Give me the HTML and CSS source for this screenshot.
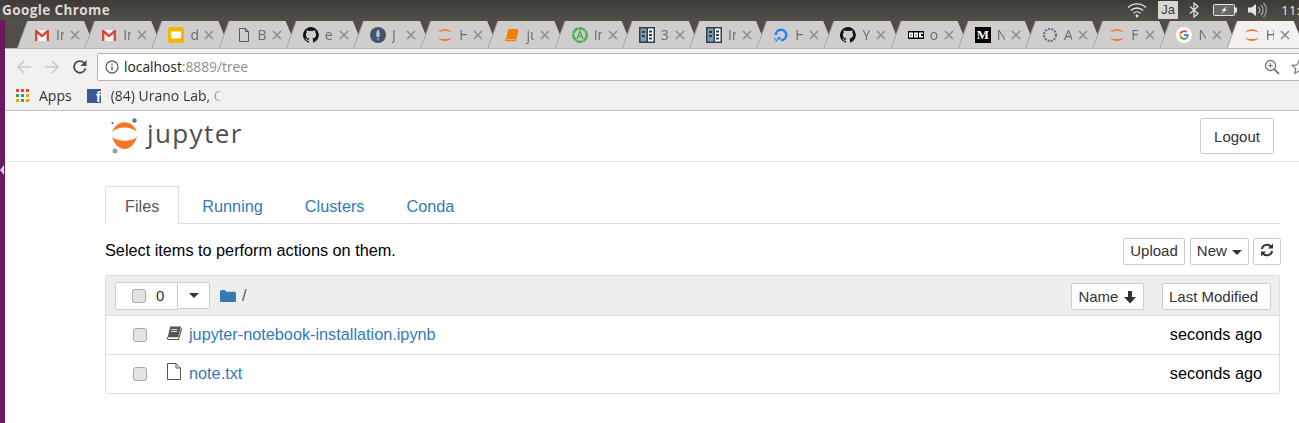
FILE: index.html
```html
<!DOCTYPE html>
<html lang="en">
<head>
  <meta charset="UTF-8" />
  <title>Home</title>
  <link rel="stylesheet" href="styles.css">
</head>
<body>

  <!-- shared icons -->
  <svg class="defs" aria-hidden="true">
    <symbol id="gmail" viewBox="0 0 16 16"><path d="M1 3h14v11h-14z" fill="#f4f4f4"/><path d="M1 14V3h2l5 4.500L13 3h2v11h-2.400V6.800L8 10.600 3.400 6.800V14z" fill="#d64a3c"/></symbol>
    <symbol id="slides" viewBox="0 0 16 16"><rect width="16" height="16" rx="2" fill="#f4b400"/><rect x="3" y="4.500" width="10" height="7" fill="#fff"/></symbol>
    <symbol id="page" viewBox="0 0 16 16"><path d="M3.500 1.500h6l3 3v10h-9zM9.500 1.500v3h3" fill="none" stroke="#555" stroke-width="1"/></symbol>
    <symbol id="github" viewBox="0 0 16 16"><path d="M8 0a8 8 0 0 0-2.500 15.600c.4.100.5-.2.500-.4v-1.400c-2.200.5-2.700-1-2.700-1-.4-.9-.9-1.200-.9-1.200-.7-.5.100-.5.100-.5.800.1 1.200.8 1.200.8.700 1.200 1.900.9 2.300.7.100-.5.300-.9.500-1.100-1.800-.2-3.600-.9-3.600-4 0-.9.300-1.600.8-2.100-.1-.2-.4-1 .1-2.100 0 0 .7-.2 2.200.8a7.600 7.600 0 0 1 4 0c1.500-1 2.200-.8 2.200-.8.400 1.100.2 1.900.1 2.100.5.600.8 1.300.8 2.100 0 3.100-1.900 3.700-3.700 3.900.3.300.6.800.6 1.500v2.200c0 .2.100.5.600.4A8 8 0 0 0 8 0z" fill="#111"/></symbol>
    <symbol id="rocket" viewBox="0 0 16 16"><circle cx="8" cy="8" r="8" fill="#45526e"/><path d="M8 2.500c2 1.500 2 5 1.500 7.500h-3C6 7.500 6 4 8 2.500z" fill="#b9c3d3"/><path d="M6.500 11h3l-1.500 3z" fill="#5cb8a6"/></symbol>
    <symbol id="jup" viewBox="0 0 16 16"><path d="M1 5.500C3.500 1 12.500 1 15 5.500 11.500 3.500 4.500 3.500 1 5.500zM1 10.500c3.500 2 10.500 2 14 0C12.500 15 3.500 15 1 10.500z" fill="#f37726"/></symbol>
    <symbol id="book" viewBox="0 0 16 16"><path d="M4.500 2H14l-2.800 10H2z" fill="#f57c00"/><path d="M2 12l-.3 1.500h9.500l2.800-10" fill="none" stroke="#f57c00" stroke-width="1.300"/></symbol>
    <symbol id="atom" viewBox="0 0 16 16"><circle cx="8" cy="8" r="6.800" fill="none" stroke="#4caf50" stroke-width="2.400" stroke-dasharray="7 .6"/><path d="M5 12l3-8 3 8M6.200 9.500h3.600" fill="none" stroke="#4caf50" stroke-width="1.500"/></symbol>
    <symbol id="columns" viewBox="0 0 16 16"><rect width="16" height="16" fill="#2d3e50"/><rect x="1.500" y="1.500" width="6" height="13" fill="#7d99b0"/><rect x="9" y="1.500" width="5.500" height="13" fill="#fff"/><path d="M3 4h3v2H3zM3 8h3v2H3zM10 3.500h3v2h-3zM10 7h3v2h-3zM10 10.500h3v2h-3z" fill="#2d3e50"/></symbol>
    <symbol id="ocean" viewBox="0 0 16 16"><path d="M8 14.500V12a4 4 0 1 0-4-4H1.500A6.500 6.500 0 1 1 8 14.500z" fill="#1a85ff"/><path d="M4.500 12.500h3V10h-3zM2.500 14.500h2v-2h-2zM1 12.500h1.500V11H1z" fill="#1a85ff"/></symbol>
    <symbol id="bbc" viewBox="0 0 16 8"><rect width="16" height="8" fill="#000"/><path d="M1 1.500h4v5H1zM6 1.500h4v5H6zM11 1.500h4v5h-4z" fill="#fff"/><path d="M2.500 3h1v.7h-1zM2.500 4.500h1v.7h-1zM7.500 3h1v.7h-1zM7.500 4.500h1v.7h-1zM13 3h2v2h-2z" fill="#000"/></symbol>
    <symbol id="ring" viewBox="0 0 16 16"><circle cx="8" cy="8" r="6" fill="none" stroke="#5d6b80" stroke-width="2" stroke-dasharray="2 1.200"/></symbol>
    <symbol id="google" viewBox="0 0 16 16"><circle cx="8" cy="8" r="8" fill="#fff"/><path d="M8 3.300a4.700 4.700 0 0 1 3.200 1.200l-1.300 1.300A2.900 2.900 0 0 0 5.300 7L3.700 5.800A4.800 4.800 0 0 1 8 3.300z" fill="#ea4335"/><path d="M3.700 5.800L5.300 7a3 3 0 0 0 0 2l-1.600 1.200a4.800 4.800 0 0 1 0-4.400z" fill="#fbbc05"/><path d="M3.700 10.200L5.300 9a2.900 2.900 0 0 0 4.500 1.400l1.500 1.200A4.800 4.800 0 0 1 3.700 10.200z" fill="#34a853"/><path d="M12.600 7.100H8V9h2.600a2.200 2.200 0 0 1-.8 1.400l1.500 1.200a4.900 4.900 0 0 0 1.300-4.500z" fill="#4285f4"/></symbol>
    <symbol id="close" viewBox="0 0 10 10"><path d="M1 1l8 8M9 1l-8 8" stroke="#8f8d8a" stroke-width="1.600"/></symbol>
  </svg>

  <div class="top-panel">
    <span class="app-name">Google Chrome</span>
    <div class="tray">
      <svg class="tray-wifi" width="20" height="16" viewBox="0 0 20 16"><path d="M1 5.500a13 13 0 0 1 18 0M3.800 8.500a9 9 0 0 1 12.400 0M6.500 11.300a5 5 0 0 1 7 0" fill="none" stroke="#e8e6e1" stroke-width="1.400"/><circle cx="10" cy="14" r="1.400" fill="#e8e6e1"/></svg>
      <span class="tray-lang">Ja</span>
      <svg class="tray-bt" width="10" height="16" viewBox="0 0 10 16"><path d="M1 4.500l8 7-4 3.500V1l4 3.500-8 7" fill="none" stroke="#e8e6e1" stroke-width="1.200"/></svg>
      <svg class="tray-batt" width="24" height="14" viewBox="0 0 24 14"><rect x=".5" y="1.500" width="21" height="11" rx="1" fill="#6a6862" stroke="#e8e6e1"/><rect x="22" y="4.500" width="2" height="5" fill="#e8e6e1"/><path d="M14 3L8.500 7.500H11L8 11l6-4.500h-2.500z" fill="#fff"/></svg>
      <svg class="tray-vol" width="20" height="16" viewBox="0 0 20 16"><path d="M0 5.500h3.500L8 2v12L3.500 10.500H0z" fill="#e8e6e1"/><path d="M10.500 5a4 4 0 0 1 0 6M13 3a7 7 0 0 1 0 10M15.500 1a10 10 0 0 1 0 14" fill="none" stroke="#aaa79f" stroke-width="1.200"/></svg>
      <span class="tray-clock">11:</span>
    </div>
  </div>

  <div class="desktop">
    <div class="launcher"><span class="launcher-arrow"></span></div>

    <div class="window">
      <div class="tabstrip">
        <div class="tab"><svg class="fav"><use href="#gmail"/></svg><span class="tab-title">In</span><svg class="tab-x"><use href="#close"/></svg></div>
        <div class="tab"><svg class="fav"><use href="#gmail"/></svg><span class="tab-title">In</span><svg class="tab-x"><use href="#close"/></svg></div>
        <div class="tab"><svg class="fav"><use href="#slides"/></svg><span class="tab-title">d</span><svg class="tab-x"><use href="#close"/></svg></div>
        <div class="tab"><svg class="fav"><use href="#page"/></svg><span class="tab-title">B</span><svg class="tab-x"><use href="#close"/></svg></div>
        <div class="tab"><svg class="fav"><use href="#github"/></svg><span class="tab-title">e</span><svg class="tab-x"><use href="#close"/></svg></div>
        <div class="tab"><svg class="fav"><use href="#rocket"/></svg><span class="tab-title">J</span><svg class="tab-x"><use href="#close"/></svg></div>
        <div class="tab"><svg class="fav"><use href="#jup"/></svg><span class="tab-title">H</span><svg class="tab-x"><use href="#close"/></svg></div>
        <div class="tab"><svg class="fav"><use href="#book"/></svg><span class="tab-title">ju</span><svg class="tab-x"><use href="#close"/></svg></div>
        <div class="tab"><svg class="fav"><use href="#atom"/></svg><span class="tab-title">In</span><svg class="tab-x"><use href="#close"/></svg></div>
        <div class="tab"><svg class="fav"><use href="#columns"/></svg><span class="tab-title">3</span><svg class="tab-x"><use href="#close"/></svg></div>
        <div class="tab"><svg class="fav"><use href="#columns"/></svg><span class="tab-title">In</span><svg class="tab-x"><use href="#close"/></svg></div>
        <div class="tab"><svg class="fav"><use href="#ocean"/></svg><span class="tab-title">H</span><svg class="tab-x"><use href="#close"/></svg></div>
        <div class="tab"><svg class="fav"><use href="#github"/></svg><span class="tab-title">Y</span><svg class="tab-x"><use href="#close"/></svg></div>
        <div class="tab"><svg class="fav fav-wide"><use href="#bbc"/></svg><span class="tab-title">o</span><svg class="tab-x"><use href="#close"/></svg></div>
        <div class="tab"><span class="fav fav-medium">M</span><span class="tab-title">N</span><svg class="tab-x"><use href="#close"/></svg></div>
        <div class="tab"><svg class="fav"><use href="#ring"/></svg><span class="tab-title">A</span><svg class="tab-x"><use href="#close"/></svg></div>
        <div class="tab"><svg class="fav"><use href="#jup"/></svg><span class="tab-title">F</span><svg class="tab-x"><use href="#close"/></svg></div>
        <div class="tab"><svg class="fav"><use href="#google"/></svg><span class="tab-title">N</span><svg class="tab-x"><use href="#close"/></svg></div>
        <div class="tab active"><svg class="fav"><use href="#jup"/></svg><span class="tab-title">H</span><svg class="tab-x"><use href="#close"/></svg></div>
      </div>

      <div class="toolbar">
        <svg class="nav-icon" width="16" height="16" viewBox="0 0 16 16"><path d="M15 8H2M8 2L2 8l6 6" fill="none" stroke="#c9c8c6" stroke-width="1.600"/></svg>
        <svg class="nav-icon" width="16" height="16" viewBox="0 0 16 16"><path d="M1 8h13M8 2l6 6-6 6" fill="none" stroke="#c9c8c6" stroke-width="1.600"/></svg>
        <svg class="nav-icon" width="16" height="16" viewBox="0 0 16 16"><path d="M13.500 9.500A5.800 5.800 0 1 1 12 3.800" fill="none" stroke="#4a4a4a" stroke-width="1.800"/><path d="M14.500 1v6h-6z" fill="#4a4a4a"/></svg>
        <div class="omnibox">
          <svg width="14" height="14" viewBox="0 0 14 14"><circle cx="7" cy="7" r="6" fill="none" stroke="#666" stroke-width="1.300"/><path d="M7 6v4.200M7 3.500v1.400" stroke="#666" stroke-width="1.400"/></svg>
          <span class="url"><span class="url-host">localhost</span>:8889/tree</span>
          <svg class="omni-zoom" width="16" height="16" viewBox="0 0 16 16"><circle cx="6.500" cy="6.500" r="5" fill="none" stroke="#777" stroke-width="1.300"/><path d="M10.200 10.200L15 15" stroke="#777" stroke-width="1.800"/><path d="M4 6.500h5M6.500 4v5" stroke="#777"/></svg>
          <svg class="omni-star" width="16" height="16" viewBox="0 0 16 16"><path d="M8 1.500l2 4.400 4.800.5-3.600 3.200 1 4.700L8 11.900l-4.200 2.400 1-4.700L1.200 6.400 6 5.900z" fill="none" stroke="#777" stroke-width="1.200"/></svg>
        </div>
      </div>

      <div class="bookmarks">
        <svg class="apps-grid" width="14" height="14" viewBox="0 0 14 14">
          <path d="M0 0h3v3H0zM5 0h3v3H5z" fill="#e8453c"/><path d="M10 0h3v3h-3z" fill="#e8453c"/>
          <path d="M0 5h3v3H0z" fill="#34a853"/><path d="M5 5h3v3H5z" fill="#4285f4"/><path d="M10 5h3v3h-3z" fill="#f4a400"/>
          <path d="M0 10h3v3H0z" fill="#f4a400"/><path d="M5 10h3v3H5z" fill="#34a853"/><path d="M10 10h3v3h-3z" fill="#f4a400"/>
        </svg>
        <span class="bm-label">Apps</span>
        <span class="fb-icon">f</span>
        <span class="bm-label bm-fade">(84) Urano Lab, C</span>
      </div>

      <div class="page">
        <header class="site-header">
          <div class="header-inner">
            <div class="logo">
              <svg width="30" height="36" viewBox="0 0 30 36">
                <path d="M2 14C7 1 22 1 27 14 21 8 8 8 2 14z" fill="#f37726"/>
                <path d="M2 19c6 5 19 5 25 0C22 35 7 35 2 19z" fill="#f37726"/>
                <circle cx="24.500" cy="2.500" r="2.200" fill="#767677"/>
                <circle cx="2.500" cy="5" r="1.100" fill="#616262"/>
                <circle cx="5" cy="33" r="2.500" fill="#9e9e9e"/>
              </svg>
              <span class="logo-text">jupyter</span>
            </div>
            <button class="btn btn-logout">Logout</button>
          </div>
        </header>

        <main class="container">
          <ul class="nav-tabs">
            <li class="active"><a href="#">Files</a></li>
            <li><a href="#">Running</a></li>
            <li><a href="#">Clusters</a></li>
            <li><a href="#">Conda</a></li>
          </ul>

          <div class="actions">
            <span class="actions-text">Select items to perform actions on them.</span>
            <div class="actions-btns">
              <button class="btn btn-sm">Upload</button>
              <button class="btn btn-sm">New <span class="caret"></span></button>
              <button class="btn btn-sm btn-refresh" aria-label="Refresh">
                <svg width="14" height="14" viewBox="0 0 14 14"><path d="M1.800 6A5.300 5.300 0 0 1 11 3.500M12.200 8A5.300 5.300 0 0 1 3 10.500" fill="none" stroke="#333" stroke-width="2"/><path d="M13 .5v5H8zM1 13.500v-5h5z" fill="#333"/></svg>
              </button>
            </div>
          </div>

          <div class="file-list">
            <div class="list-header">
              <div class="select-group">
                <label class="select-all"><input type="checkbox"> <span>0</span></label>
                <button class="select-menu" aria-label="Select"><span class="caret"></span></button>
              </div>
              <svg class="folder" width="16" height="14" viewBox="0 0 16 14"><path d="M0 2.500A1.500 1.500 0 0 1 1.500 1h3.200l1.600 1.800h8.200A1.500 1.500 0 0 1 16 4.300v7.200a1.500 1.500 0 0 1-1.500 1.500h-13A1.500 1.500 0 0 1 0 11.500z" fill="#337ab7"/></svg>
              <span class="crumb">/</span>
              <button class="btn btn-sm btn-name">Name
                <svg width="14" height="14" viewBox="0 0 14 14"><path d="M5 1h4v6h4l-6 6.500L1 7h4z" fill="#333"/></svg>
              </button>
              <button class="btn btn-sm btn-modified">Last Modified</button>
            </div>

            <div class="list-row">
              <input type="checkbox">
              <svg class="file-icon" width="16" height="16" viewBox="0 0 16 16"><path d="M4.200 1.500H15l-2.800 10.700H1.700z" fill="#555"/><path d="M1.700 12.200l-.4 1.200.8 1.100h10.400L15.700 3.500" fill="none" stroke="#555" stroke-width="1.100"/><path d="M5.500 4.500h6M5 6.500h6" stroke="#fff" stroke-width=".8"/></svg>
              <a class="file-name" href="#">jupyter-notebook-installation.ipynb</a>
              <span class="file-time">seconds ago</span>
            </div>
            <div class="list-row">
              <input type="checkbox">
              <svg class="file-icon" width="16" height="17" viewBox="0 0 16 17"><path d="M1.500 .5h8.500l4.500 4.500v11.500h-13zM10 .5V5h4.500" fill="none" stroke="#555" stroke-width="1"/></svg>
              <a class="file-name" href="#">note.txt</a>
              <span class="file-time">seconds ago</span>
            </div>
          </div>
        </main>
      </div>
    </div>
  </div>

</body>
</html>
```

FILE: styles.css
```css
:root {
  --link: #337ab7;
  --line: #ddd;
  --btn-line: #ccc;
  --chrome: #f2f1f0;
  --tab: #d0cecc;
  --panel-top: #3c3b37;
  --panel-bottom: #504e46;
}

html, body {
  margin: 0;
  height: 423px;
  overflow: hidden;
}

body {
  display: flex;
  flex-direction: column;
  font-family: "Liberation Sans", Arial, sans-serif;
  font-size: 16.25px;
  color: #000;
  background: #fff;
}

.defs {
  display: none;
}

/* Ubuntu top panel */
.top-panel {
  flex: 0 0 20px;
  display: flex;
  align-items: center;
  justify-content: space-between;
  background: linear-gradient(to bottom, var(--panel-top), var(--panel-bottom));
  color: #dfdbd2;
}

.app-name {
  margin-left: 2px;
  font-family: "Open Sans", sans-serif;
  font-size: 13.5px;
  font-weight: 700;
  letter-spacing: .4px;
}

.tray {
  display: flex;
  align-items: center;
}

.tray-wifi { margin-right: 11px; }

.tray-lang {
  width: 20px;
  height: 18px;
  line-height: 18px;
  text-align: center;
  background: #d9d7d2;
  color: #3c3b37;
  font-size: 13px;
  border-radius: 1px;
  margin-right: 11px;
}

.tray-bt { margin-right: 14px; }
.tray-batt { margin-right: 11px; }
.tray-vol { margin-right: 13px; }

.tray-clock {
  width: 18px;
  overflow: hidden;
  white-space: nowrap;
  font-family: "Open Sans", sans-serif;
  font-size: 13.5px;
  color: #e8e6e1;
}

.desktop {
  flex: 1;
  display: flex;
  min-height: 0;
}

.launcher {
  flex: 0 0 5px;
  background: #6c1a5e;
  overflow: hidden;
}

.launcher-arrow {
  display: block;
  width: 0;
  margin-top: 145px;
  border-top: 5px solid transparent;
  border-bottom: 5px solid transparent;
  border-right: 4px solid #d8d6d8;
}

.window {
  flex: 1;
  min-width: 0;
  display: flex;
  flex-direction: column;
}

/* Chrome tab strip */
.tabstrip {
  flex: 0 0 29px;
  box-sizing: border-box;
  display: flex;
  padding: 1px 0 0 13px;
  background: var(--panel-bottom);
  border-bottom: 1px solid #b5b3b0;
  overflow: hidden;
}

.tab {
  position: relative;
  flex: 0 0 77px;
  height: 27px;
  margin-right: -9.8px;
  display: flex;
  align-items: center;
  padding-left: 16px;
  box-sizing: border-box;
  filter: drop-shadow(-1px 0 0 #a5a3a0);
}

.tab::before {
  content: "";
  position: absolute;
  top: 0; left: 0; right: 0; bottom: 0;
  background: var(--tab);
  clip-path: polygon(10px 0, calc(100% - 11px) 0, 100% 100%, 0 100%);
}

.tab.active::before {
  background: var(--chrome);
}

.fav {
  position: relative;
  flex: 0 0 16px;
  width: 16px;
  height: 16px;
}

.fav-wide {
  height: 8px;
}

.fav-medium {
  background: #000;
  color: #fff;
  font-family: "Liberation Serif", serif;
  font-weight: bold;
  font-size: 13px;
  line-height: 16px;
  text-align: center;
}

.tab-title {
  position: relative;
  flex: 0 0 8px;
  margin-left: 6px;
  overflow: hidden;
  font-family: "Open Sans", sans-serif;
  font-size: 14px;
  color: #6d6b68;
}

.tab-x {
  position: relative;
  flex: 0 0 10px;
  width: 10px;
  height: 10px;
  margin-left: 6px;
}

/* Chrome toolbar */
.toolbar {
  flex: 0 0 32px;
  box-sizing: border-box;
  display: flex;
  align-items: center;
  padding: 3px 0 0 11px;
  background: var(--chrome);
}

.nav-icon {
  margin-right: 12px;
}

.omnibox {
  flex: 1;
  height: 26px;
  display: flex;
  align-items: center;
  margin-left: -3px;
  padding-left: 7px;
  margin-right: -6px;
  background: #fff;
  border: 1px solid #b5b3b0;
  border-radius: 2px 0 0 2px;
}

.url {
  margin-left: 5px;
  font-family: "Open Sans", sans-serif;
  font-size: 13.8px;
  color: #8e8e8e;
}

.url-host {
  color: #222;
}

.omni-zoom {
  margin-left: auto;
  margin-right: 11px;
}

.omni-star {
  margin-right: -3px;
}

.bookmarks {
  flex: 0 0 30px;
  box-sizing: border-box;
  display: flex;
  align-items: center;
  padding-left: 11px;
  background: var(--chrome);
  border-bottom: 1px solid #c4c3c1;
}

.apps-grid {
  margin-right: 9px;
}

.bm-label {
  font-family: "Open Sans", sans-serif;
  font-size: 14px;
  color: #333;
}

.bm-fade {
  width: 112px;
  overflow: hidden;
  white-space: nowrap;
  -webkit-mask-image: linear-gradient(to right, #000 85%, transparent);
}

.fb-icon {
  width: 14px;
  height: 14px;
  margin: 0 10px 0 15px;
  background: #3b5998;
  color: #fff;
  font-weight: bold;
  font-size: 14px;
  line-height: 16px;
  text-align: right;
  overflow: hidden;
}

/* Jupyter page */
.page {
  flex: 1;
  background: #fff;
  min-height: 0;
}

.site-header {
  height: 51px;
  box-sizing: border-box;
  border-bottom: 1px solid #e7e7e7;
}

.header-inner {
  display: flex;
  align-items: center;
  justify-content: space-between;
  height: 50px;
  padding: 0 25px 0 105px;
}

.logo {
  display: flex;
  align-items: center;
}

.logo-text {
  margin: -6px 0 0 7px;
  font-family: "Open Sans", sans-serif;
  font-size: 26px;
  letter-spacing: 1.4px;
  color: #4e4e4e;
}

.btn {
  font-family: "Liberation Sans", Arial, sans-serif;
  background: #fff;
  color: #333;
  border: 1px solid var(--btn-line);
  border-radius: 2px;
  cursor: pointer;
}

.btn-logout {
  width: 74px;
  height: 36px;
  font-size: 15px;
  padding: 0;
}

.btn-sm {
  height: 27px;
  font-size: 15px;
  padding: 0 6px;
}

.container {
  margin-left: 100px;
  width: 1175px;
  padding-top: 24px;
}

.nav-tabs {
  display: flex;
  list-style: none;
  margin: 0;
  padding: 0;
  height: 38px;
  box-sizing: border-box;
  border-bottom: 1px solid var(--line);
}

.nav-tabs a {
  display: block;
  height: 38px;
  box-sizing: border-box;
  padding: 10px 18px 0;
  margin-right: 4px;
  color: var(--link);
  text-decoration: none;
  border: 1px solid transparent;
}

.nav-tabs .active a {
  padding: 10px 19px 0;
  color: #555;
  background: #fff;
  border-color: var(--line) var(--line) #fff;
  border-radius: 2px 2px 0 0;
}

.actions {
  display: flex;
  align-items: center;
  justify-content: space-between;
  height: 27px;
  margin-top: 14px;
}

.actions-text {
  margin-top: -2px;
}

.actions-btns {
  display: flex;
  gap: 5px;
  margin-right: -1px;
}

.actions-btns .btn {
  padding-bottom: 2px;
}

.actions-btns .btn-refresh {
  width: 28px;
  padding: 0;
  margin-left: -1px;
}

.caret {
  display: inline-block;
  width: 0;
  height: 0;
  margin-left: 1px;
  vertical-align: middle;
  border-top: 5px solid #333;
  border-left: 5px solid transparent;
  border-right: 5px solid transparent;
}

.file-list {
  margin-top: 10px;
  border: 1px solid var(--line);
  border-radius: 2px;
}

.list-header {
  height: 40px;
  box-sizing: border-box;
  display: flex;
  align-items: center;
  padding: 0 8px 0 9px;
  background: #eee;
  border-bottom: 1px solid var(--line);
}

.select-group {
  display: flex;
  height: 28px;
}

.select-all {
  width: 61px;
  display: flex;
  align-items: center;
  background: #fff;
  border: 1px solid var(--btn-line);
  border-radius: 2px 0 0 2px;
  font-size: 15px;
  color: #333;
}

.select-menu {
  width: 33px;
  height: 27px;
  margin-left: -1px;
  padding: 0;
  background: #fff;
  border: 1px solid var(--btn-line);
  border-radius: 0 2px 2px 0;
}

.folder {
  margin-left: 10px;
}

.crumb {
  margin-left: 6px;
  color: #555;
}

.btn-name {
  margin: 1px 0 0 auto;
  width: 73px;
  white-space: nowrap;
  padding: 0;
}

.btn-name svg {
  vertical-align: -2px;
}

.btn-modified {
  width: 109px;
  margin: 1px 0 0 18px;
  padding: 0 0 0 6px;
  text-align: left;
}

input[type="checkbox"] {
  appearance: none;
  flex: 0 0 14px;
  width: 14px;
  height: 14px;
  margin: 0;
  background: #e4e4e4;
  border: 1px solid #a9a9a9;
  border-radius: 3px;
}

.select-all input[type="checkbox"] {
  margin: 0 10px 0 16px;
}

.list-row {
  height: 38px;
  box-sizing: border-box;
  display: flex;
  align-items: center;
  padding: 0 17px 1px 27px;
}

.list-row + .list-row {
  height: 39px;
  border-top: 1px solid var(--line);
}

.file-icon {
  margin: -4px 0 0 19px;
}

.file-name {
  margin-left: 7px;
  color: var(--link);
  text-decoration: none;
}

.file-time {
  margin-left: auto;
}
```
